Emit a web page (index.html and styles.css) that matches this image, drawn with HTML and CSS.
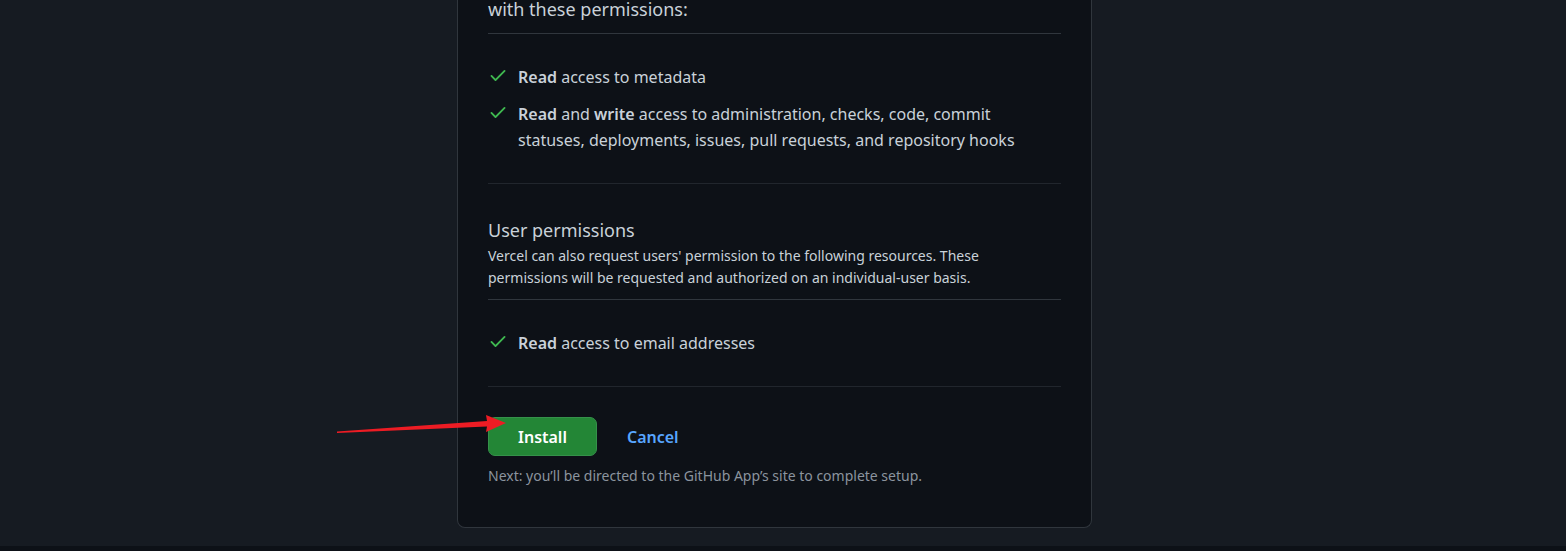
FILE: index.html
```html
<!DOCTYPE html>
<html lang="en">
<head>
<meta charset="utf-8">
<meta name="viewport" content="width=device-width, initial-scale=1">
<title>Install Vercel</title>
<link rel="stylesheet" href="styles.css">
</head>
<body>
<main class="page">
  <section class="card">
    <h2 class="heading heading-ruled">with these permissions:</h2>
    <ul class="permissions">
      <li class="permission">
        <svg class="check" viewBox="0 0 16 16" aria-hidden="true"><path d="M13.78 4.22a.75.75 0 0 1 0 1.06l-7.25 7.25a.75.75 0 0 1-1.06 0L2.22 9.28a.751.751 0 0 1 1.06-1.06L6 10.94l6.72-6.72a.75.75 0 0 1 1.06 0Z"/></svg>
        <p class="text"><strong>Read</strong> access to metadata</p>
      </li>
      <li class="permission">
        <svg class="check" viewBox="0 0 16 16" aria-hidden="true"><path d="M13.78 4.22a.75.75 0 0 1 0 1.06l-7.25 7.25a.75.75 0 0 1-1.06 0L2.22 9.28a.751.751 0 0 1 1.06-1.06L6 10.94l6.72-6.72a.75.75 0 0 1 1.06 0Z"/></svg>
        <p class="text"><strong>Read</strong> and <strong>write</strong> access to administration, checks, code, commit statuses, deployments, issues, pull requests, and repository hooks</p>
      </li>
    </ul>
    <div class="user-permissions">
      <h2 class="heading">User permissions</h2>
      <p class="note">Vercel can also request users' permission to the following resources. These permissions will be requested and authorized on an individual-user basis.</p>
    </div>
    <ul class="permissions">
      <li class="permission">
        <svg class="check" viewBox="0 0 16 16" aria-hidden="true"><path d="M13.78 4.22a.75.75 0 0 1 0 1.06l-7.25 7.25a.75.75 0 0 1-1.06 0L2.22 9.28a.751.751 0 0 1 1.06-1.06L6 10.94l6.72-6.72a.75.75 0 0 1 1.06 0Z"/></svg>
        <p class="text"><strong>Read</strong> access to email addresses</p>
      </li>
    </ul>
    <div class="actions">
      <button class="install" type="button">Install</button>
      <a class="cancel" href="#">Cancel</a>
      <svg class="arrow" viewBox="0 0 170 20" aria-hidden="true"><path d="M0 15.5 150 5 149 -1 169 7 149 16 150 10.5 0 17Z"/></svg>
    </div>
    <p class="next">Next: you’ll be directed to the GitHub App’s site to complete setup.</p>
  </section>
</main>
</body>
</html>
```
FILE: styles.css
```css
* { box-sizing: border-box; }

body {
  margin: 0;
  background: #0d1117;
  color: #c9d1d9;
  font-family: "Segoe UI", "Noto Sans", sans-serif;
}

.page {
  padding: 0 17px 18px 0;
  background: #161b22;
}

.card {
  max-width: 635px;
  margin: 0 auto;
  padding: 0 30px 40px;
  background: #0d1117;
  border: 1px solid #30363d;
  border-top: 0;
  border-radius: 0 0 8px 8px;
}

.heading {
  margin: 0;
  font-size: 18px;
  font-weight: 400;
  line-height: 30px;
}

.heading-ruled {
  padding-bottom: 15px;
  border-bottom: 1px solid #30363d;
  line-height: 18px;
}

.permissions {
  display: grid;
  gap: 11px;
  margin: 0;
  padding: 30px 0;
  border-bottom: 1px solid #21262d;
  list-style: none;
}

.permission {
  display: flex;
  gap: 10px;
}

.check {
  flex: none;
  width: 20px;
  height: 20px;
  margin-top: 1px;
  fill: #3fb950;
}

.text {
  margin: 0;
  font-size: 16px;
  line-height: 26px;
}

.text strong { font-weight: 600; }

.user-permissions {
  padding: 31px 0 10px;
  border-bottom: 1px solid #30363d;
}

.note,
.next {
  margin: 0;
  font-size: 14px;
  line-height: 22px;
}

.actions {
  position: relative;
  display: flex;
  align-items: center;
  gap: 30px;
  margin: 30px 0 9px;
}

.install {
  height: 39px;
  padding: 0 29px;
  background: #238636;
  border: 1px solid #35914a;
  border-radius: 7px;
  color: #fff;
  font: 600 16px/26px "Segoe UI", "Noto Sans", sans-serif;
}

.cancel {
  color: #58a6ff;
  font-size: 16px;
  font-weight: 600;
  line-height: 26px;
  text-decoration: none;
}

.arrow {
  position: absolute;
  top: -1px;
  left: -151px;
  width: 170px;
  height: 20px;
  overflow: visible;
  fill: #ed1c24;
}

.next { color: #8b949e; }
```
